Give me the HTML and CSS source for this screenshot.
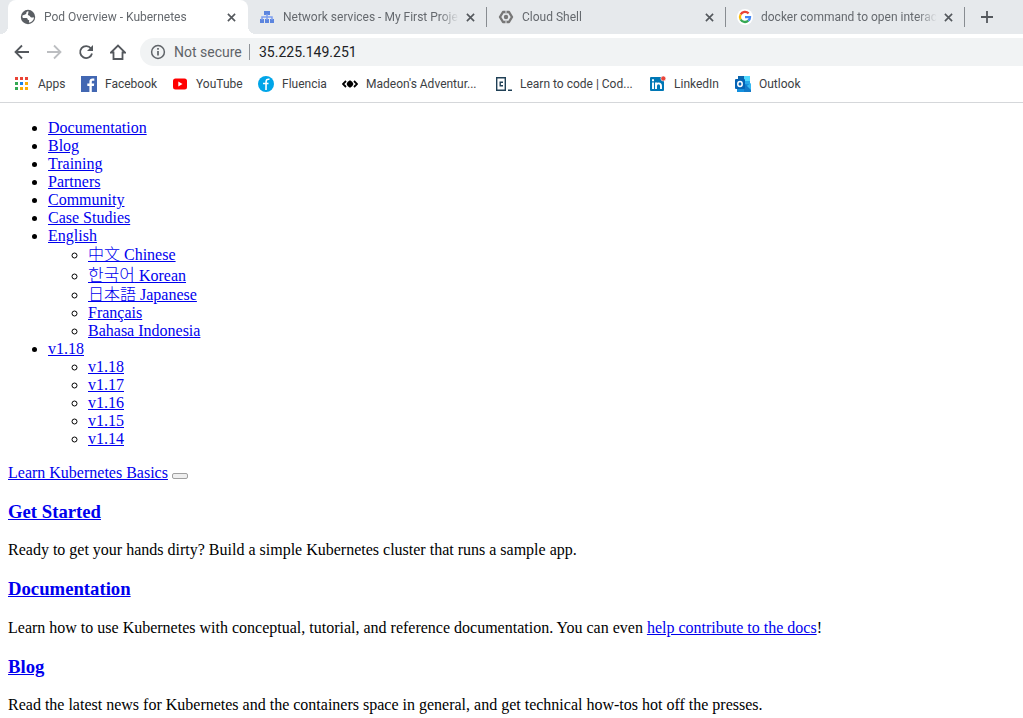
FILE: index.html
```html
<!DOCTYPE html>
<html lang="en">
<head>
<meta charset="utf-8">
<title>Pod Overview - Kubernetes</title>
<link rel="stylesheet" href="styles.css">
</head>
<body>
<header class="browser">
  <div class="tabs">
    <div class="tab tab-active">
      <svg class="icon" viewBox="0 0 16 16"><circle cx="8" cy="8" r="7.2" fill="#5a5e63"/><path d="M8.500 2.300c-2 .2-2.600 1.600-2.200 2.800-1.300.3-2 1.200-3.800 1.300-.3 1.500.1 2.200.7 2.600h3.300c1 .2 1.400.9 1.200 1.800l1.500.4-.3 2.400c3-.3 5-2.800 5.100-5.400-.9.400-2 .6-3.200 0-.8-.7-.7-1.700-2-1.800-1-.2-1.300-1.300-.5-2.100z" fill="#fff"/></svg>
      <span class="tab-title">Pod Overview - Kubernetes</span>
      <button class="tab-close" aria-label="Close tab"><svg viewBox="0 0 10 10"><path d="M1 1l8 8M9 1L1 9"/></svg></button>
    </div>
    <div class="tab">
      <svg class="icon" viewBox="0 0 16 16"><path d="M5 2h6v4H5zM1 10h4v4H1zM6 10h4v4H6zM11 10h4v4h-4z" fill="#5c85de"/><path d="M8 5v6M3 11V8h10v3" fill="none" stroke="#7d9ff0" stroke-width="1.500"/></svg>
      <span class="tab-title">Network services - My First Proje</span>
      <button class="tab-close" aria-label="Close tab"><svg viewBox="0 0 10 10"><path d="M1 1l8 8M9 1L1 9"/></svg></button>
    </div>
    <div class="tab">
      <svg class="icon" viewBox="0 0 16 16"><path d="M5 3h6l3 5-3 5H5L2 8z" fill="none" stroke="#777" stroke-width="2.400" stroke-linejoin="round"/><circle cx="8" cy="8" r="2.200" fill="#777"/><path d="M8 1v3M8 12v3" stroke="#e6e9ec"/></svg>
      <span class="tab-title">Cloud Shell</span>
      <button class="tab-close" aria-label="Close tab"><svg viewBox="0 0 10 10"><path d="M1 1l8 8M9 1L1 9"/></svg></button>
    </div>
    <div class="tab">
      <svg class="icon" viewBox="0 0 16 16"><circle cx="8" cy="8" r="8" fill="#fff"/><g fill="none" stroke-width="2.300"><path d="M3.600 5.500A5 5 0 0 1 11.600 4.400" stroke="#ea4335"/><path d="M3.600 5.500a5 5 0 0 0 0 5" stroke="#fbbc05"/><path d="M3.600 10.500a5 5 0 0 0 7.700 1.200" stroke="#34a853"/><path d="M11.300 11.700A5 5 0 0 0 13 8.100H8" stroke="#4285f4"/></g></svg>
      <span class="tab-title">docker command to open interac</span>
      <button class="tab-close" aria-label="Close tab"><svg viewBox="0 0 10 10"><path d="M1 1l8 8M9 1L1 9"/></svg></button>
    </div>
    <button class="new-tab" aria-label="New tab"><svg viewBox="0 0 12 12"><path d="M6 0v12M0 6h12"/></svg></button>
  </div>

  <div class="toolbar">
    <button class="tool" aria-label="Back"><svg viewBox="0 0 16 16"><path d="M15 8H2M8 1.500L1.500 8 8 14.500"/></svg></button>
    <button class="tool tool-disabled" aria-label="Forward" disabled><svg viewBox="0 0 16 16"><path d="M1 8h13M8 1.500L14.500 8 8 14.500"/></svg></button>
    <button class="tool" aria-label="Reload"><svg viewBox="0 0 16 16"><path d="M13 4.500A6 6 0 1 0 14 9.500"/><path d="M15 1v6H9z" fill="#54585d" stroke="none"/></svg></button>
    <button class="tool" aria-label="Home"><svg viewBox="0 0 16 16"><path d="M1 8.500L8 1.500l7 7h-2.500V15h-9V8.500z"/></svg></button>
    <div class="omnibox">
      <svg class="icon" viewBox="0 0 16 16"><circle cx="8" cy="8" r="6.400" fill="none" stroke="#5f6368" stroke-width="1.500"/><path d="M8 7v4.500M8 4v1.700" stroke="#5f6368" stroke-width="1.700"/></svg>
      <span class="security">Not secure</span>
      <input class="url" type="text" aria-label="Address" value="35.225.149.251">
    </div>
  </div>

  <nav class="bookmarks" aria-label="Bookmarks">
    <a class="bookmark" href="#"><svg class="icon" viewBox="0 0 16 16"><path d="M1 1h3v3H1zM6 1h3v3H6zM11 1h3v3h-3z" fill="#ea4335"/><path d="M1 6h3v3H1zM1 11h3v3H1z" fill="#34a853"/><path d="M6 6h3v3H6z" fill="#1a82e8"/><path d="M11 6h3v3h-3zM6 11h3v3H6zM11 11h3v3h-3z" fill="#fbac05"/></svg><span class="label w-apps">Apps</span></a>
    <a class="bookmark" href="#"><svg class="icon" viewBox="0 0 16 16"><path d="M0 0h16v16H0z" fill="#4267b2"/><path d="M8.400 16V10H6.300V7.500h2.100V5.700c0-2.100 1.200-3.200 3.100-3.200l1.800.1v2.200H12c-1 0-1.200.5-1.200 1.200v1.500h2.400l-.3 2.500h-2.100v6z" fill="#fff"/></svg><span class="label w-facebook">Facebook</span></a>
    <a class="bookmark" href="#"><svg class="icon" viewBox="0 0 16 16"><rect x="1" y="2.500" width="14" height="11" rx="2.500" fill="#f00"/><path d="M6.300 5.500v5l4.200-2.500z" fill="#fff"/></svg><span class="label w-youtube">YouTube</span></a>
    <a class="bookmark" href="#"><svg class="icon" viewBox="0 0 16 16"><circle cx="8" cy="8" r="8" fill="#00a5e8"/><path d="M11.500 3.300C9 2.800 8.200 4 8.100 5.800L8 14M5 7.500h5.500" fill="none" stroke="#fff" stroke-width="1.600"/></svg><span class="label w-fluencia">Fluencia</span></a>
    <a class="bookmark" href="#"><svg class="icon" viewBox="0 0 16 16"><path d="M4 5L1 8l3 3M12 5l3 3-3 3" fill="none" stroke="#000" stroke-width="1.800"/><path d="M8 4l3.500 4L8 12 4.500 8z"/><circle cx="8" cy="8" r="2.900"/></svg><span class="label w-madeon">Madeon's Adventur...</span></a>
    <a class="bookmark" href="#"><svg class="icon" viewBox="0 0 16 16"><path d="M.7 1.700h8.600v12.600H.7zM12 14.300h4" fill="none" stroke="#204056" stroke-width="1.400"/><path d="M7 6.200H4.200v3.600H7" fill="none" stroke="#204056" stroke-width="1.400"/></svg><span class="label w-code">Learn to code | Cod...</span></a>
    <a class="bookmark" href="#"><svg class="icon" viewBox="0 0 16 16"><rect x="0" y="1" width="14" height="14" rx="1" fill="#0077b5"/><path d="M3 6.500V13M6 13V6.500M6 10c0-3.500 5-3.500 5 0v3" fill="none" stroke="#fff" stroke-width="1.900"/><path d="M2 3.300h2v2H2z" fill="#fff"/><circle cx="13.300" cy="2.500" r="2.500" fill="#e8443a" stroke="#fff" stroke-width=".6"/></svg><span class="label w-linkedin">LinkedIn</span></a>
    <a class="bookmark" href="#"><svg class="icon" viewBox="0 0 16 16"><path d="M3 0h12v9H3z" fill="#28a8ea"/><path d="M9 0h6v5H9z" fill="#50d9ff"/><path d="M3 0h6v4H3z" fill="#0a64ac"/><path d="M2 8h14v8H2z" fill="#1490df"/><path d="M9 12l7-5v9z" fill="#35b8f1"/><path d="M9 7l7 7v2H9z" fill="#127ac9"/><rect y="3" width="10" height="10" rx="1" fill="#0463b5"/><ellipse cx="5" cy="8" rx="2.200" ry="2.500" fill="none" stroke="#fff" stroke-width="1.500"/></svg><span class="label">Outlook</span></a>
  </nav>
</header>

<main class="page">
  <ul>
    <li><a href="#">Documentation</a></li>
    <li><a href="#">Blog</a></li>
    <li><a href="#">Training</a></li>
    <li><a href="#">Partners</a></li>
    <li><a href="#">Community</a></li>
    <li><a href="#">Case Studies</a></li>
    <li><a href="#">English</a>
      <ul>
        <li class="cjk"><a href="#" lang="zh">中文 Chinese</a></li>
        <li class="cjk korean"><a href="#" lang="ko"><span class="hangul">한국어</span> Korean</a></li>
        <li class="cjk"><a href="#" lang="ja">日本語 Japanese</a></li>
        <li><a href="#">Français</a></li>
        <li><a href="#">Bahasa Indonesia</a></li>
      </ul>
    </li>
    <li><a href="#">v1.18</a>
      <ul>
        <li><a href="#">v1.18</a></li>
        <li><a href="#">v1.17</a></li>
        <li><a href="#">v1.16</a></li>
        <li><a href="#">v1.15</a></li>
        <li><a href="#">v1.14</a></li>
      </ul>
    </li>
  </ul>
  <div><a href="#">Learn Kubernetes Basics</a> <button class="menu-toggle" aria-label="Menu"></button></div>
  <h3><a href="#">Get Started</a></h3>
  <p>Ready to get your hands dirty? Build a simple Kubernetes cluster that runs a sample app.</p>
  <h3><a href="#">Documentation</a></h3>
  <p>Learn how to use Kubernetes with conceptual, tutorial, and reference documentation. You can even <a href="#">help contribute to the docs</a>!</p>
  <h3><a href="#">Blog</a></h3>
  <p>Read the latest news for Kubernetes and the containers space in general, and get technical how-tos hot off the presses.</p>
</main>
</body>
</html>
```

FILE: styles.css
```css
body {
  margin: 0;
  height: 100vh;
  display: flex;
  flex-direction: column;
  overflow: hidden;
  background: #fff;
}

.browser {
  flex: none;
  border-bottom: 1px solid #d5d7da;
  font-family: Roboto, "Open Sans", sans-serif;
  font-size: 12px;
  color: #3c4043;
}

.browser button {
  display: flex;
  align-items: center;
  justify-content: center;
  flex: none;
  padding: 0;
  border: 0;
  background: none;
}

.browser button svg {
  fill: none;
  stroke: #54585d;
  stroke-width: 1.8;
}

.icon {
  flex: none;
  width: 16px;
  height: 16px;
}

/* Tab strip */
.tabs {
  display: flex;
  height: 34px;
  padding-left: 8px;
  overflow: hidden;
  background: #e6e9ec;
}

.tab {
  display: flex;
  align-items: center;
  box-sizing: border-box;
  flex: 0 1 239px;
  min-width: 0;
  padding: 0 10px 0 11px;
  position: relative;
  color: #65696e;
}

.tab:not(.tab-active)::after {
  content: "";
  position: absolute;
  right: 0;
  top: 7px;
  width: 1px;
  height: 20px;
  background: #888c91;
}

.tab-active {
  flex-basis: 240px;
  padding-left: 12px;
  border-radius: 8px 8px 0 0;
  background: #fff;
}

.tab-active::before,
.tab-active::after {
  content: "";
  position: absolute;
  bottom: 0;
  width: 8px;
  height: 8px;
}

.tab-active::before {
  right: 100%;
  background: radial-gradient(circle at 0 0, #e6e9ec 8px, #fff 8px);
}

.tab-active::after {
  left: 100%;
  background: radial-gradient(circle at 100% 0, #e6e9ec 8px, #fff 8px);
}

.tab-title {
  flex: 1;
  min-width: 0;
  margin-left: 8px;
  overflow: hidden;
  white-space: nowrap;
  mask-image: linear-gradient(to left, transparent, #000 20px);
}

.tab-close {
  width: 14px;
  height: 20px;
  margin-left: 4px;
}

.tab-close svg {
  width: 9px;
  height: 9px;
}

.new-tab {
  width: 28px;
  margin-left: 8px;
}

.new-tab svg {
  width: 12px;
  height: 12px;
}

/* Navigation and address */
.toolbar {
  display: flex;
  align-items: center;
  height: 36px;
  padding-left: 6px;
}

.browser .tool {
  width: 32px;
  height: 32px;
}

.tool svg {
  width: 16px;
  height: 16px;
}

.browser .tool-disabled svg {
  stroke: #bcbec1;
}

.omnibox {
  display: flex;
  flex: 1;
  align-items: center;
  height: 28px;
  margin-left: 6px;
  padding-left: 10px;
  border-radius: 14px 0 0 14px;
  background: #f1f3f4;
  font-size: 14px;
}

.security {
  width: 76px;
  margin-left: 8px;
  box-sizing: border-box;
  border-right: 1px solid #909499;
  line-height: 16px;
  color: #5f6368;
  white-space: nowrap;
}

.url {
  flex: 1;
  min-width: 0;
  padding: 0 0 0 9px;
  border: 0;
  outline: 0;
  background: none;
  color: #202124;
  font: inherit;
}

/* Bookmarks bar */
.bookmarks {
  display: flex;
  align-items: center;
  gap: 16px;
  height: 28px;
  padding: 0 0 4px 14px;
}

.bookmark {
  display: flex;
  align-items: center;
  gap: 8px;
  color: inherit;
  text-decoration: none;
  white-space: nowrap;
}

.w-apps { width: 27px; }
.w-facebook { width: 51px; }
.w-youtube { width: 46px; }
.w-fluencia { width: 44px; }
.w-madeon { width: 114px; }
.w-code { width: 114px; }
.w-linkedin { width: 45px; }

/* Document */
.page {
  flex: 1;
  min-height: 0;
  padding: 0 8px;
  overflow: hidden;
  font-family: "Liberation Serif", "Noto Sans CJK SC", serif;
  font-size: 16px;
}

.page a {
  color: #0000ee;
}

.cjk {
  padding-top: 1px;
  line-height: 18px;
}

.korean {
  padding-top: 2px;
}

.hangul {
  font-family: "Noto Sans CJK KR", sans-serif;
  font-size: 17px;
  line-height: 16px;
}

.cjk a {
  font-weight: 300;
}

.menu-toggle {
  box-sizing: border-box;
  width: 16px;
  height: 6px;
  padding: 0;
  border: 1px solid #a0a0a0;
  border-radius: 2px;
  background: #efefef;
}
```
